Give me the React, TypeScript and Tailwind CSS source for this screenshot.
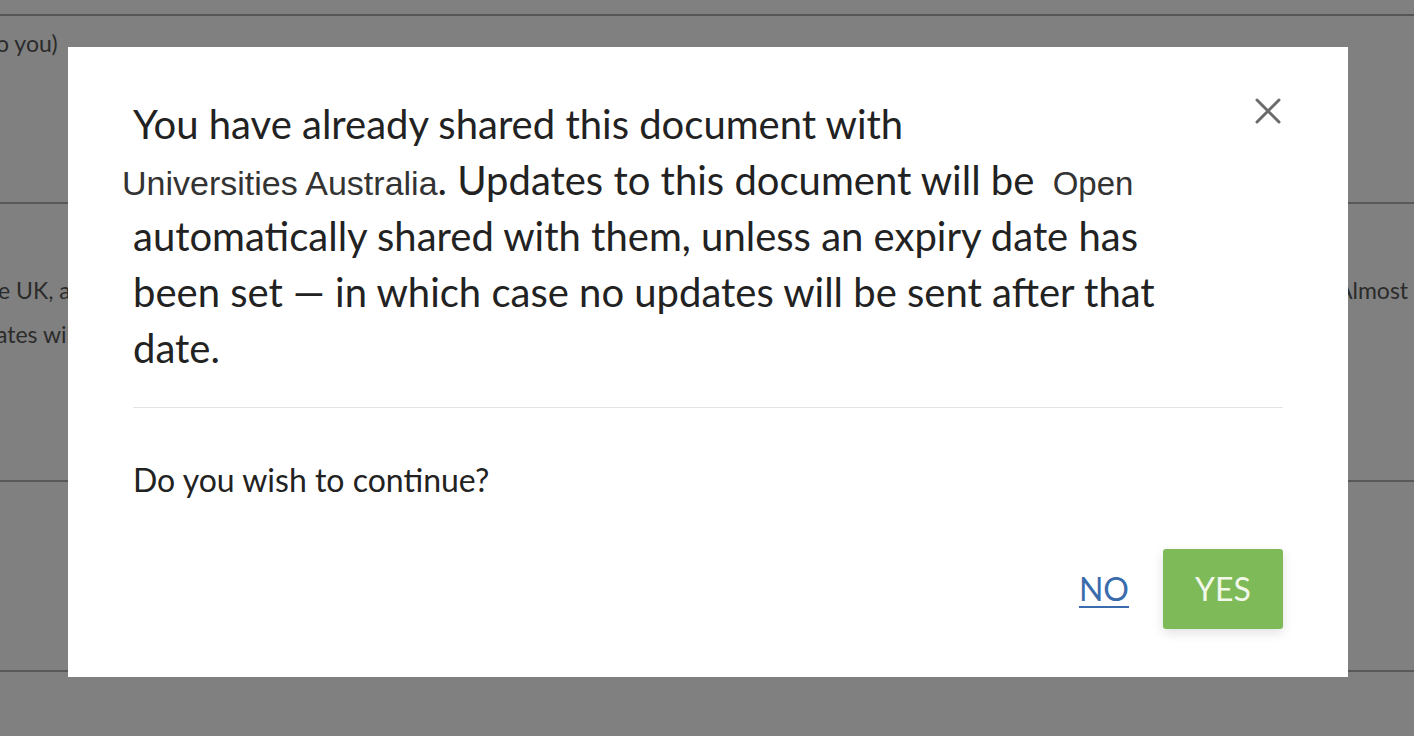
export default function App() {
  return (
    <div className="relative w-[1414px] h-[736px] overflow-hidden bg-[#808080] font-['Lato','Liberation_Sans',sans-serif] text-[#2b2b2b]">
      {/* background page, dimmed */}
      <div className="flex flex-col">
        <div className="h-[16px] border-b-2 border-[#555]"></div>
        <div className="h-[188px] border-b-2 border-[#585858] pt-[12px] text-[23px] leading-[30px] whitespace-nowrap">
          <span className="ml-[-4px]">o you)</span>
        </div>
        <div className="h-[278px] border-b-2 border-[#585858] pt-[64px] flex text-[23px] leading-[44px] whitespace-nowrap">
          <div className="w-[1338px] shrink-0">
            <div className="ml-[-2px]">e UK, and the</div>
            <div className="ml-[-4px]">ates will be</div>
          </div>
          <div className="ml-[-1px]">Almost there</div>
        </div>
        <div className="h-[190px] border-b-2 border-[#585858]"></div>
      </div>

      {/* modal */}
      <div className="absolute left-[68px] top-[47px] w-[1280px] h-[630px] bg-white px-[65px] pt-[49px]">
        <button className="absolute left-[1186px] top-[50px] w-[28px] h-[28px] text-[#6b6b6b]">
          <svg viewBox="0 0 28 28" className="w-[28px] h-[28px]" fill="none" stroke="currentColor" strokeWidth="3" strokeLinecap="round">
            <path d="M3 3L25 25M25 3L3 25" />
          </svg>
        </button>

        <p className="w-[1060px] text-[40px] leading-[56px] text-[#222]">
          You have already shared this document with{' '}
          <span className="inline-block whitespace-nowrap ml-[-11px] font-['Liberation_Sans',Arial,sans-serif] text-[34px] leading-[40px] text-[#333]">Universities Australia</span>
          . Updates to this document will be{' '}
          <span className="inline-block whitespace-nowrap ml-[8px] font-['Liberation_Sans',Arial,sans-serif] text-[33px] leading-[40px] text-[#333]">Open</span>{' '}
          automatically shared with them, unless an expiry date has been set — in which case no updates will be sent after that date.
        </p>

        <div className="mt-[31px] border-t border-[#e3e3e3]"></div>

        <p className="mt-[52px] text-[32px] leading-[40px] text-[#222]">Do you wish to continue?</p>

        <div className="mt-[49px] flex items-center justify-end gap-[33px]">
          <a href="#" className="mr-[1px] text-[32px] text-[#3a6cad] underline underline-offset-[5px] decoration-2">NO</a>
          <button className="w-[120px] h-[80px] rounded-[3px] bg-[#7fba59] text-[32px] text-[#f1f8ea] shadow-[0_4px_12px_rgba(0,0,0,0.12)]">YES</button>
        </div>
      </div>
    </div>
  )
}
